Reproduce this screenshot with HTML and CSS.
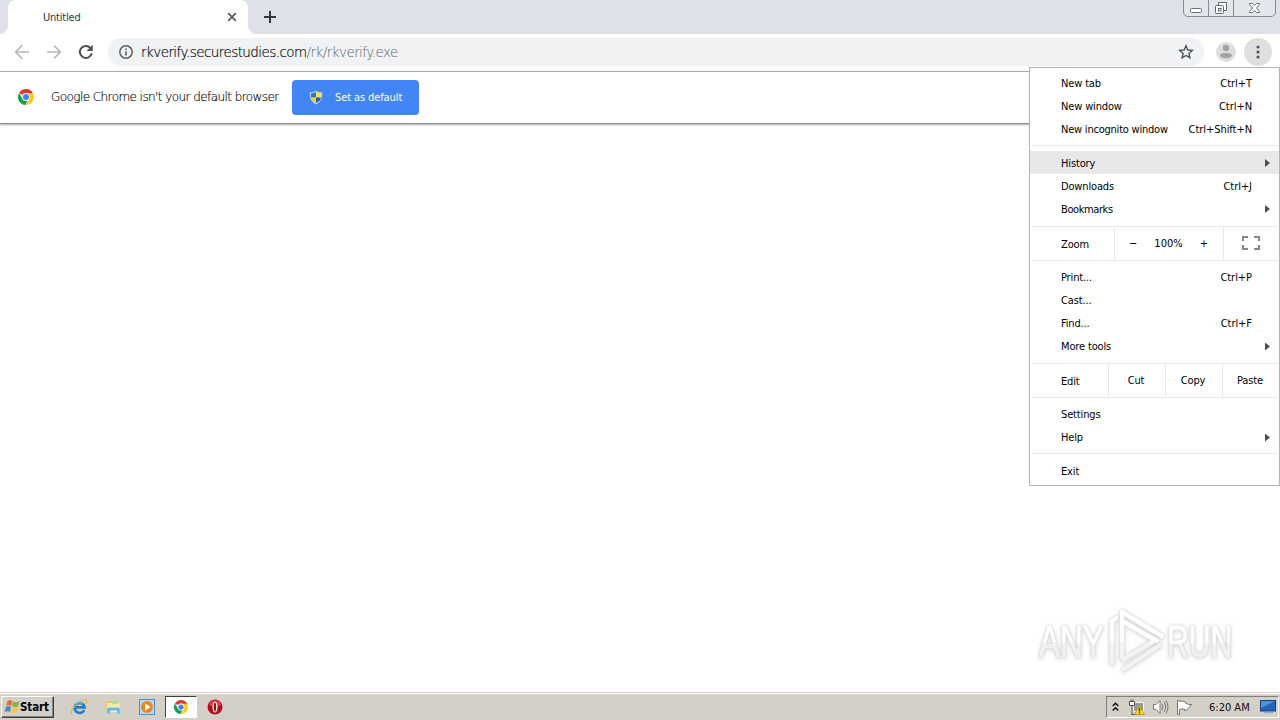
FILE: index.html
```html
<!DOCTYPE html>
<html lang="en">
<head>
<meta charset="utf-8">
<title>Untitled</title>
<link rel="stylesheet" href="styles.css">
</head>
<body>
<svg class="defs" width="0" height="0">
  <symbol id="chrome" viewBox="0 0 16 16">
    <circle cx="8" cy="8" r="8" fill="#fff"/>
    <path d="M8 8 1.07 4A8 8 0 0 1 14.93 4Z" fill="#db3a2c"/>
    <path d="M8 4.2H14.95A8 8 0 0 1 8 16L11.5 9.8Z" fill="#fbc91c"/>
    <path d="M1.07 4 4.7 10 8 11.7 9.9 11.2 7.4 16A8 8 0 0 1 1.07 4Z" fill="#189d55"/>
    <circle cx="8" cy="8" r="3.9" fill="#fff"/>
    <circle cx="8" cy="8" r="3" fill="#4580ec"/>
  </symbol>
</svg>
<div class="screen">
  <header class="tabstrip">
    <div class="tab">
      <span class="tab-title">Untitled</span>
      <svg class="tab-close" width="10" height="10" viewBox="0 0 10 10"><path d="M1.2 1.2 8.8 8.8M8.8 1.2 1.2 8.8" stroke="#555a60" stroke-width="1.7"/></svg>
    </div>
    <svg class="new-tab" width="12" height="12" viewBox="0 0 12 12"><path d="M6 0V12M0 6H12" stroke="#36393f" stroke-width="2"/></svg>
    <div class="window-buttons">
      <span class="wb wb-min"><svg width="14" height="16" viewBox="0 0 14 16"><rect x="1.5" y="8.5" width="11" height="4" rx="1" fill="#fff" stroke="#6b7078"/></svg></span>
      <span class="wb wb-max"><svg width="14" height="16" viewBox="0 0 14 16"><path d="M4.500 5V2.500H12.500V10.500H10" fill="#fff" stroke="#62666d"/><rect x="1.500" y="5.500" width="8" height="8" rx="1" fill="#fff" stroke="#62666d"/><rect x="4.500" y="8.500" width="2.500" height="2.500" fill="#fff" stroke="#62666d"/></svg></span>
      <span class="wb wb-close"><svg width="14" height="16" viewBox="0 0 14 16"><path d="M1.500 3.500H4.500L6.500 5.700 8.500 3.500H11.500V4.500L8.500 8 11.500 11.500V12.500H8.500L6.500 10.300 4.500 12.500H1.500V11.500L4.500 8 1.500 4.500Z" fill="#fff" stroke="#6b7078"/></svg></span>
    </div>
  </header>
  <div class="toolbar">
    <svg class="nav" width="16" height="16" viewBox="0 0 16 16"><path d="M15 8H2M8 1.500 1.700 8 8 14.500" fill="none" stroke="#b4b6b9" stroke-width="1.700"/></svg>
    <svg class="nav" width="16" height="16" viewBox="0 0 16 16"><path d="M1 8H14M8 1.500 14.300 8 8 14.500" fill="none" stroke="#b4b6b9" stroke-width="1.700"/></svg>
    <svg class="nav" width="16" height="16" viewBox="0 0 16 16"><path d="M13.700 9.300A6 6 0 1 1 12.400 4" fill="none" stroke="#4d5156" stroke-width="2"/><path d="M14.800 .8V7H8.600Z" fill="#4d5156"/></svg>
    <div class="omnibox">
      <svg class="info" width="14" height="14" viewBox="0 0 14 14"><circle cx="7" cy="7" r="6.200" fill="none" stroke="#5c6065" stroke-width="1.500"/><path d="M7 6.200V10.500M7 3.400V5" stroke="#5c6065" stroke-width="1.600"/></svg>
      <span class="url">rkverify.securestudies.com<span class="url-path">/rk/rkverify.exe</span></span>
      <svg class="star" width="16" height="16" viewBox="0 0 16 16"><path d="M8 1.800 9.800 6 14.300 6.400 10.900 9.400 11.900 13.900 8 11.500 4.100 13.900 5.100 9.400 1.700 6.400 6.200 6Z" fill="none" stroke="#4d5156" stroke-width="1.400"/></svg>
    </div>
    <svg class="avatar" width="20" height="20" viewBox="0 0 20 20"><circle cx="10" cy="10" r="10" fill="#dedede"/><circle cx="10" cy="6" r="3.200" fill="#a2a2a2"/><path d="M4 13.500C4 10.200 16 10.200 16 13.500 15 17 5 17 4 13.500Z" fill="#a2a2a2"/></svg>
    <span class="more"><svg width="4" height="14" viewBox="0 0 4 14"><circle cx="2" cy="2" r="1.600" fill="#54575b"/><circle cx="2" cy="7" r="1.600" fill="#54575b"/><circle cx="2" cy="12" r="1.600" fill="#54575b"/></svg></span>
  </div>
  <div class="infobar">
    <svg class="infobar-logo" width="16" height="16"><use href="#chrome"/></svg>
    <span class="infobar-text">Google Chrome isn't your default browser</span>
    <div class="default-button">
      <svg width="14" height="15" viewBox="0 0 14 15"><path d="M7 .5C9 2 11 2.300 13.300 2.300 13.600 8 12 12 7 14.500 2 12 .4 8 .7 2.300 3 2.300 5 2 7 .5Z" fill="#b9d0e6"/><path d="M7 2C5.300 3 3.700 3.400 2 3.500V7.500H7Z" fill="#2873c5"/><path d="M7 2C8.700 3 10.300 3.400 12 3.500V7.500H7Z" fill="#ffe04a"/><path d="M2 7.500H7V13C4 11.500 2.500 10 2 7.500Z" fill="#f5d21f"/><path d="M12 7.500H7V13C10 11.500 11.500 10 12 7.500Z" fill="#2360a8"/></svg>
      <span class="default-label">Set as default</span>
    </div>
  </div>
  <main class="page"></main>
  <footer class="taskbar">
    <div class="start">
      <svg width="17" height="16" viewBox="0 0 17 16"><path d="M3.500 2Q6 .5 8.500 2L7.300 7Q5 5.700 2.200 7Z" fill="#ed6b32"/><path d="M9.300 2.500Q12 4 15.500 2.200L14.200 7.200Q11 9 8.100 7.300Z" fill="#82b83e"/><path d="M2 7.800Q5 6.500 7.100 7.800L5.900 12.800Q3.500 11.500.6 12.900Z" fill="#3e8bd0"/><path d="M7.900 8.200Q11 9.800 14 8.100L12.700 13Q9.500 15 6.700 13.300Z" fill="#f7c93c"/></svg>
      <span class="start-label">Start</span>
    </div>
    <div class="launchers">
      <span class="launcher"><svg width="18" height="18" viewBox="0 0 18 18"><path d="M14.200 12A5 5 0 1 1 14.600 9.300H6" fill="none" stroke="#1c7fd0" stroke-width="2.700"/><path d="M2 16C-1 13 9 1.500 15.500 1.500 17.500 1.800 16.800 4 16 5.500" fill="none" stroke="#dfb53a" stroke-width="1.200"/><path d="M5.500 5.800Q9 3 12.500 5.800" fill="none" stroke="#70c8f2" stroke-width="1.200"/></svg></span>
      <span class="launcher"><svg width="18" height="18" viewBox="0 0 18 18"><path d="M2 3H7L8 4.500H15V14H2Z" fill="#e6c85c"/><path d="M3 5H15.500V14H3Z" fill="#fbeaa1"/><path d="M8 3H14V6H8Z" fill="#b5dc9a"/><path d="M3 16V11Q3 9.500 4.500 9.500H14.500Q16 9.500 16 11V16H13V12.500H6V16Z" fill="#62b5df" stroke="#b2def1" stroke-width=".7"/></svg></span>
      <span class="launcher"><svg width="18" height="18" viewBox="0 0 18 18"><rect x="1.500" y="1.500" width="15" height="15" fill="#b5d9f1" stroke="#4c91c9"/><circle cx="9" cy="9" r="6" fill="#f1841d"/><path d="M7 5.300V12.700L12.600 9Z" fill="#fff"/></svg></span>
      <span class="launcher active"><svg width="14" height="14"><use href="#chrome"/></svg></span>
      <span class="launcher"><svg width="16" height="16" viewBox="0 0 16 16"><circle cx="8" cy="8" r="7.500" fill="#ad1119"/><path d="M2 6A6.200 6.200 0 0 1 14 6Q8 9 2 6Z" fill="#dc4141"/><ellipse cx="8" cy="8" rx="2.500" ry="5.500" fill="#fff"/><ellipse cx="8" cy="8" rx="1.200" ry="4.600" fill="#9b1015"/></svg></span>
    </div>
    <div class="tray">
      <svg class="tray-up" width="7" height="10" viewBox="0 0 7 10"><path d="M.7 4 3.500 1.300 6.300 4M.7 8.500 3.500 5.800 6.300 8.500" fill="none" stroke="#111" stroke-width="1.500"/></svg>
      <svg class="tray-net" width="18" height="17" viewBox="0 0 18 17"><rect x="5.500" y="3.500" width="10" height="9" fill="#9a9a96" stroke="#f4f4f4"/><path d="M3 15.500H9" stroke="#666"/><path d="M1.500 2.500H6.500V6.500H1.500ZM4 7V15M3 .500V3M5 .500V3" fill="#f9f9f6" stroke="#555"/><path d="M11.500 6.500 16.500 15.500H6.500Z" fill="#ffdc1e" stroke="#a58c16" stroke-width=".7"/><path d="M11.500 9V12.500M11.500 13.300V14.600" stroke="#222" stroke-width="1.300"/></svg>
      <svg class="tray-sound" width="17" height="16" viewBox="0 0 17 16"><path d="M1.500 5.500H4L8 1.500V14.500L4 10.500H1.500Z" fill="#fff" stroke="#777"/><path d="M10 5Q12 8 10 11M12 3Q15.500 8 12 13M14 1.500Q18 8 14 14.500" fill="none" stroke="#777"/></svg>
      <svg class="tray-flag" width="17" height="16" viewBox="0 0 17 16"><path d="M1.500 1.500V15.500H3.500V10.500Q6.500 9 9 10.500V12Q12 10.500 15.500 5.500 12 6 9.500 4V3Q6.500 1 3.500 2.500V1.500Z" fill="#fff" stroke="#707070"/></svg>
      <span class="clock">6:20 AM</span>
      <svg class="desktop" width="16" height="14" viewBox="0 0 16 14"><rect x=".5" y=".5" width="15" height="10.500" fill="#2463b6" stroke="#163d7d"/><path d="M1 1H15L1 8Z" fill="#4f91db"/><path d="M4 12.500H13" stroke="#8baed3" stroke-width="1.500"/></svg>
    </div>
  </footer>

  <nav class="menu">
    <div class="item"><span>New tab</span><span>Ctrl+T</span></div>
    <div class="item"><span>New window</span><span>Ctrl+N</span></div>
    <div class="item"><span class="incognito">New incognito window</span><span>Ctrl+Shift+N</span></div>
    <div class="separator"></div>
    <div class="item sub selected"><span>History</span><i class="arrow"></i></div>
    <div class="item low"><span>Downloads</span><span>Ctrl+J</span></div>
    <div class="item sub low"><span class="bookmarks">Bookmarks</span><i class="arrow"></i></div>
    <div class="separator flush"></div>
    <div class="strip zoom">
      <span class="strip-name">Zoom</span>
      <div class="zoom-controls"><span>−</span><span class="percent">100%</span><span>+</span></div>
      <span class="cell"><svg width="18" height="14" viewBox="0 0 18 14"><path d="M1 5V1H6M12 1H17V5M17 9V13H12M6 13H1V9" fill="none" stroke="#85878a" stroke-width="2"/></svg></span>
    </div>
    <div class="separator top-flush"></div>
    <div class="item"><span>Print...</span><span>Ctrl+P</span></div>
    <div class="item"><span>Cast...</span></div>
    <div class="item"><span>Find...</span><span>Ctrl+F</span></div>
    <div class="item sub"><span>More tools</span><i class="arrow"></i></div>
    <div class="separator flush edit-separator"></div>
    <div class="strip edit">
      <span class="strip-name">Edit</span><span class="cell">Cut</span><span class="cell">Copy</span><span class="cell">Paste</span>
    </div>
    <div class="separator top-flush"></div>
    <div class="item"><span>Settings</span></div>
    <div class="item sub"><span>Help</span><i class="arrow"></i></div>
    <div class="separator last"></div>
    <div class="item"><span>Exit</span></div>
  </nav>

  <svg class="watermark" width="240" height="75" viewBox="0 0 240 75">
    <defs>
      <linearGradient id="fade" gradientUnits="userSpaceOnUse" x1="0" y1="0" x2="0" y2="70"><stop offset=".53" stop-color="#fff"/><stop offset=".58" stop-color="#f3f3f3"/></linearGradient>
      <linearGradient id="fade-text" gradientUnits="userSpaceOnUse" x1="0" y1="-54" x2="0" y2="16"><stop offset=".55" stop-color="#fff"/><stop offset=".6" stop-color="#f1f1f1"/></linearGradient>
    </defs>
    <g class="wm-text">
      <text transform="translate(9 54) scale(.7 1)">ANY</text>
      <text transform="translate(137 54) scale(.67 1)">RUN</text>
    </g>
    <g fill="none" stroke="url(#fade)" stroke-width="4.500" stroke-linejoin="round" stroke-linecap="round">
      <path d="M82 60V18L86 15M92 55V9L132 33"/>
      <path d="M92 18 127 38M130 42 94 66M94 56 124 38"/>
    </g>
  </svg>
</div>
</body>
</html>
```
FILE: styles.css
```css
* { box-sizing: border-box; }
body { margin: 0; font-family: "DejaVu Sans Condensed", "DejaVu Sans", sans-serif; font-stretch: condensed; font-size: 11px; color: #111; overflow: hidden; }
svg { display: block; flex: none; }
.defs { position: absolute; }
.screen { position: relative; width: 1280px; height: 720px; display: flex; flex-direction: column; background: #fff; white-space: nowrap; }
.tabstrip { height: 34px; flex: none; display: flex; align-items: flex-start; background: #dee1e8; }
.tab { position: relative; width: 240px; height: 34px; margin-left: 8px; padding: 0 11px 0 35px; display: flex; align-items: center; justify-content: space-between; background: #fff; border-radius: 8px 8px 0 0; }
.tab::before, .tab::after { content: ""; position: absolute; bottom: 0; width: 8px; height: 8px; }
.tab::before { left: -8px; background: radial-gradient(circle at 0 0, transparent 7.5px, #fff 8px); }
.tab::after { right: -8px; background: radial-gradient(circle at 100% 0, transparent 7.5px, #fff 8px); }
.tab-title { color: #333639; letter-spacing: -.2px; }
.new-tab { margin: 11px 0 0 16px; }
.window-buttons { margin: -1px 4px 0 auto; display: flex; height: 18px; border: 1px solid #858b96; border-radius: 0 0 5px 5px; background: #e3e6eb; }
.wb { display: flex; justify-content: center; width: 25px; border-right: 1px solid #858b96; }
.wb-close { width: 41px; border-right: 0; }
.toolbar { height: 37px; flex: none; display: flex; align-items: center; padding: 0 8px 1px 14px; }
.nav { margin-right: 16px; }
.omnibox { width: 1096px; height: 28px; margin-left: -2px; padding: 0 10px 0 11px; display: flex; align-items: center; border-radius: 14px; background: #f0f2f4; }
.url { margin-left: 8px; font-family: "DejaVu Sans Light", "DejaVu Sans", sans-serif; font-stretch: normal; font-weight: 200; font-size: 13.5px; letter-spacing: -.57px; color: #000; -webkit-text-stroke: .15px #000; }
.url-path { color: #606367; -webkit-text-stroke: 0; }
.star { margin-left: auto; }
.avatar { margin-left: 12px; }
.more { width: 28px; height: 28px; margin-left: 8px; display: flex; align-items: center; justify-content: center; border-radius: 50%; background: #dfdfdf; }
.infobar { height: 53px; flex: none; display: flex; align-items: center; padding-left: 18px; border-top: 1px solid #adadad; border-bottom: 1px solid #8b8b8b; box-shadow: 0 1px 2px #aaa; z-index: 1; }
.infobar-logo, .infobar-text { margin-bottom: 1px; }
.infobar-text { width: 228px; margin-left: 17px; font-family: "DejaVu Sans Light", "DejaVu Sans", sans-serif; font-stretch: normal; font-weight: 200; font-size: 12px; letter-spacing: -.57px; color: #000; -webkit-text-stroke: .15px #000; }
.default-button { width: 127px; height: 35px; margin-left: 13px; padding-left: 17px; display: flex; align-items: center; border-radius: 4px; background: #4285f4; color: #fff; }
.default-label { margin-left: 12px; letter-spacing: -.1px; }
.page { flex: 1; }
.taskbar { height: 28px; flex: none; display: flex; align-items: center; background: #d4d0c8; border-top: 1px solid #d4d0c8; box-shadow: inset 0 1px #fff; padding-top: 1px; }
.start { width: 53px; height: 22px; margin-left: 1px; padding-left: 2px; display: flex; align-items: center; border: 1px solid; border-color: #fff #404040 #404040 #fff; box-shadow: inset -1px -1px #808080; }
.start-label { margin-left: -1px; font-weight: bold; font-size: 11.5px; letter-spacing: -.1px; color: #000; }
.launchers { display: flex; align-items: center; margin-left: 9px; gap: 2px; }
.launcher { width: 32px; height: 22px; display: flex; align-items: center; justify-content: center; }
.launcher.active { background: #fff; border: 1px solid; border-color: #404040 #fff #fff #404040; }
.tray { width: 173px; height: 22px; margin-left: auto; margin-right: 1px; display: flex; align-items: center; border: 1px solid; border-color: #808080 #fff #fff #808080; padding-left: 5px; }
.tray-net { margin-left: 9px; }
.tray-sound { margin-left: 6px; }
.tray-flag { margin-left: 7px; }
.clock { margin-left: 16px; width: 42px; }
.desktop { margin-left: 9px; }
.menu { position: absolute; left: 1029px; top: 67px; width: 251px; height: 419px; padding-top: 4px; background: #fff; border: 1px solid #b3b3b3; z-index: 2; color: #000; letter-spacing: -.15px; }
.item { height: 23px; padding: 0 27px 0 31px; display: flex; align-items: center; justify-content: space-between; }
.item.sub { padding-right: 9px; }
.item span + span { letter-spacing: -.05px; }
.incognito { letter-spacing: -.22px; }
.bookmarks { letter-spacing: -.4px; }
.selected, .low { padding-top: 1px; }
.selected { background: #e8e8eb; }
.arrow { width: 5px; height: 8px; background: #505050; clip-path: polygon(0 0, 100% 50%, 0 100%); }
.separator { height: 1px; margin: 4px 1px 5px 2px; background: #e7e8ea; }
.separator.flush { margin: 6px 1px 0 2px; }
.separator.top-flush { margin: 0 1px 5px 2px; }
.separator.edit-separator { margin-top: 5px; }
.separator.last { margin-bottom: 6px; }
.strip { display: flex; height: 33px; }
.strip-name { padding: 2px 0 0 31px; display: flex; align-items: center; }
.zoom .strip-name { width: 84px; }
.edit .strip-name { width: 78px; }
.zoom-controls { width: 109px; padding: 0 15px 0 14px; display: flex; align-items: center; justify-content: space-between; border-left: 1px solid #e7e8ea; }
.percent { letter-spacing: 0; }
.cell { flex: 1; display: flex; align-items: center; justify-content: center; padding-right: 2px; border-left: 1px solid #e7e8ea; }
.zoom .cell { padding-bottom: 1px; }
.watermark { position: absolute; left: 1030px; top: 603px; filter: drop-shadow(0 0 1px #ccc) drop-shadow(0 1px 2px #ddd); }
.wm-text { font: 45px "Liberation Sans", Arial, sans-serif; fill: url(#fade-text); stroke: url(#fade-text); stroke-width: 1; }
```
